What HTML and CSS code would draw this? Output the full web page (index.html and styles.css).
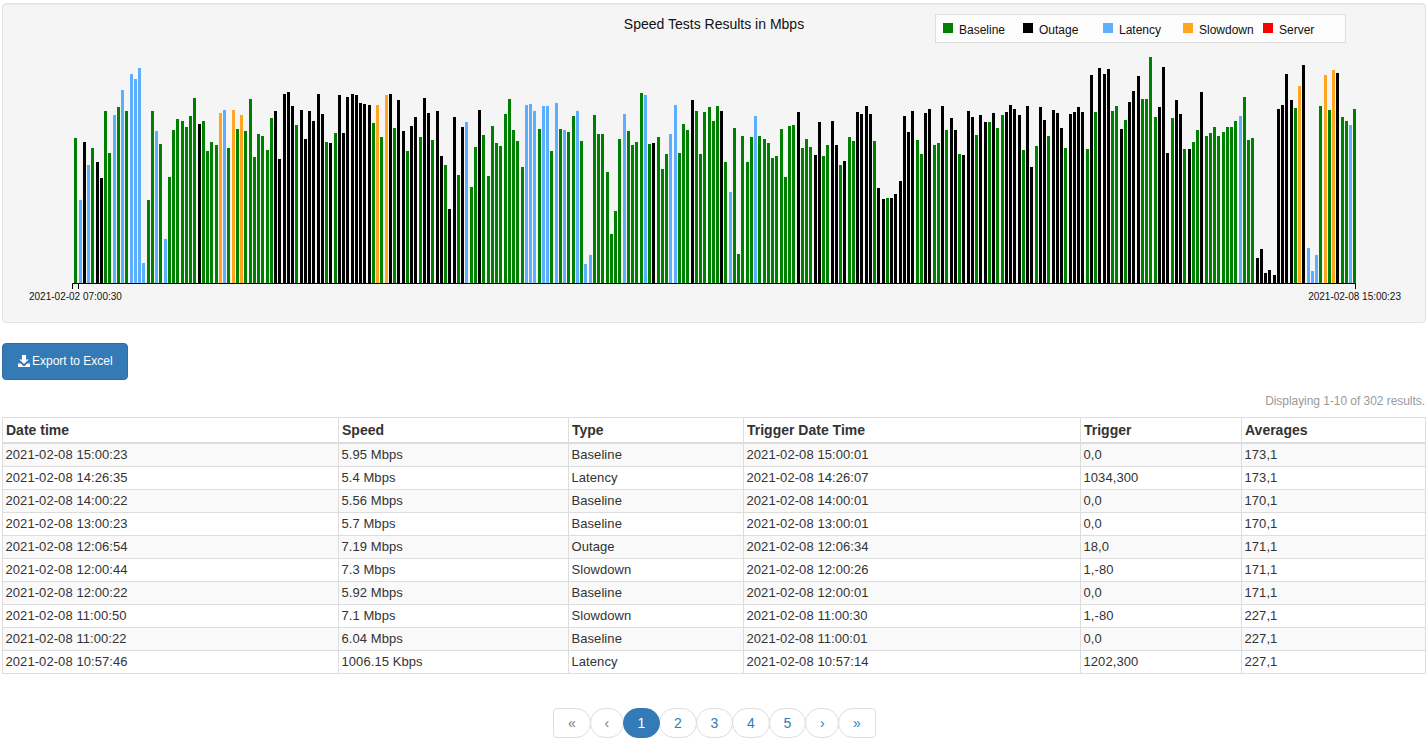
FILE: index.html
```html
<!DOCTYPE html>
<html lang="en">
<head>
<meta charset="utf-8">
<title>Speed Tests</title>
<link rel="stylesheet" href="styles.css">
</head>
<body>
<div class="well">
  <svg id="chart" class="chart" viewBox="3 4 1422 318" width="1422" height="318">
    <text class="chart-title" x="714" y="29" text-anchor="middle">Speed Tests Results in Mbps</text>
    <rect class="legend-box" x="935.5" y="14.5" width="410" height="28"></rect>
    <rect class="c-g" x="943" y="23" width="10" height="10"></rect>
    <text class="legend-text" x="959" y="34">Baseline</text>
    <rect class="c-k" x="1023" y="23" width="10" height="10"></rect>
    <text class="legend-text" x="1039" y="34">Outage</text>
    <rect class="c-b" x="1103" y="23" width="10" height="10"></rect>
    <text class="legend-text" x="1119" y="34">Latency</text>
    <rect class="c-o" x="1183" y="23" width="10" height="10"></rect>
    <text class="legend-text" x="1199" y="34">Slowdown</text>
    <rect class="c-r" x="1263" y="23" width="10" height="10"></rect>
    <text class="legend-text" x="1279" y="34">Server</text>
    <g id="bars"></g>
    <path class="axis" d="M72.500 289V283.500H1355.500V289M78.500 283.500V289"></path>
    <text class="axis-text" x="29" y="300">2021-02-02 07:00:30</text>
    <text class="axis-text" x="1401" y="300" text-anchor="end">2021-02-08 15:00:23</text>
  </svg>
</div>
<button class="btn" type="button">
  <svg class="btn-icon" viewBox="0 0 12 12" width="12" height="12"><path d="M4 0h4v4.500h2.600L6 9 1.400 4.500H4zM0 8.500h2.800L5 10.700c.6.500 1.400.500 2 0l2.200-2.200H12V12H0z"></path></svg>
  <span class="btn-label">Export to Excel</span>
</button>
<div class="summary">Displaying 1-10 of 302 results.</div>
<table class="grid">
  <colgroup>
    <col class="w1"><col class="w2"><col class="w3"><col class="w4"><col class="w5"><col class="w6">
  </colgroup>
  <thead>
    <tr><th>Date time</th><th>Speed</th><th>Type</th><th>Trigger Date Time</th><th>Trigger</th><th>Averages</th></tr>
  </thead>
  <tbody>
    <tr><td>2021-02-08 15:00:23</td><td>5.95 Mbps</td><td>Baseline</td><td>2021-02-08 15:00:01</td><td>0,0</td><td>173,1</td></tr>
    <tr><td>2021-02-08 14:26:35</td><td>5.4 Mbps</td><td>Latency</td><td>2021-02-08 14:26:07</td><td>1034,300</td><td>173,1</td></tr>
    <tr><td>2021-02-08 14:00:22</td><td>5.56 Mbps</td><td>Baseline</td><td>2021-02-08 14:00:01</td><td>0,0</td><td>170,1</td></tr>
    <tr><td>2021-02-08 13:00:23</td><td>5.7 Mbps</td><td>Baseline</td><td>2021-02-08 13:00:01</td><td>0,0</td><td>170,1</td></tr>
    <tr><td>2021-02-08 12:06:54</td><td>7.19 Mbps</td><td>Outage</td><td>2021-02-08 12:06:34</td><td>18,0</td><td>171,1</td></tr>
    <tr><td>2021-02-08 12:00:44</td><td>7.3 Mbps</td><td>Slowdown</td><td>2021-02-08 12:00:26</td><td>1,-80</td><td>171,1</td></tr>
    <tr><td>2021-02-08 12:00:22</td><td>5.92 Mbps</td><td>Baseline</td><td>2021-02-08 12:00:01</td><td>0,0</td><td>171,1</td></tr>
    <tr><td>2021-02-08 11:00:50</td><td>7.1 Mbps</td><td>Slowdown</td><td>2021-02-08 11:00:30</td><td>1,-80</td><td>227,1</td></tr>
    <tr><td>2021-02-08 11:00:22</td><td>6.04 Mbps</td><td>Baseline</td><td>2021-02-08 11:00:01</td><td>0,0</td><td>227,1</td></tr>
    <tr><td>2021-02-08 10:57:46</td><td>1006.15 Kbps</td><td>Latency</td><td>2021-02-08 10:57:14</td><td>1202,300</td><td>227,1</td></tr>
  </tbody>
</table>
<nav class="pager">
  <a class="page page-first page-muted">«</a>
  <a class="page page-arrow page-muted">‹</a>
  <a class="page page-num active">1</a>
  <a class="page page-num">2</a>
  <a class="page page-num">3</a>
  <a class="page page-num">4</a>
  <a class="page page-num">5</a>
  <a class="page page-arrow">›</a>
  <a class="page page-last">»</a>
</nav>
<script src="chart.js"></script>
</body>
</html>
```
FILE: styles.css
```css
* { box-sizing: border-box; }
html, body { margin: 0; height: 100%; overflow: hidden; }
body {
  padding: 3px 2px 0;
  background: #fff;
  color: #333;
  font-family: "Liberation Sans", Arial, sans-serif;
  font-size: 13px;
}
.well {
  height: 320px;
  background: #f5f5f5;
  border: 1px solid #e3e3e3;
  border-radius: 4px;
  box-shadow: inset 0 1px 1px rgba(0, 0, 0, .05);
}
.chart { display: block; }
.chart-title { font-size: 14px; fill: #111; }
.legend-box { fill: #fcfcfc; stroke: #ddd; }
.legend-text { font-size: 12px; fill: #111; }
.axis { fill: none; stroke: #000; stroke-width: 1; }
.axis-text { font-size: 10px; fill: #111; }
.c-g { fill: #008000; }
.c-k { fill: #000; }
.c-b { fill: #5caeff; }
.c-o { fill: #ffa51f; }
.c-r { fill: #f00; }
.btn {
  display: flex;
  align-items: center;
  gap: 2px;
  margin-top: 20px;
  width: 126px;
  height: 37px;
  padding: 0 0 0 15px;
  background: #337ab7;
  border: 1px solid #2e6da4;
  border-radius: 4px;
  color: #fff;
  font: 12px "Liberation Sans", Arial, sans-serif;
}
.btn-icon { fill: #fff; flex: none; margin-bottom: 2px; }
.btn-label { margin-bottom: 2px; }
.summary {
  margin-top: 14px;
  padding-right: 1px;
  height: 23px;
  line-height: 15px;
  text-align: right;
  color: #999;
  font-size: 12px;
  letter-spacing: -.05px;
}
.grid {
  width: 1423px;
  table-layout: fixed;
  border-collapse: collapse;
  border: 1px solid #ddd;
}
.w1 { width: 336px; }
.w2 { width: 230px; }
.w3 { width: 175px; }
.w4 { width: 337px; }
.w5 { width: 161px; }
.w6 { width: 184px; }
.grid th, .grid td {
  border: 1px solid #ddd;
  text-align: left;
  line-height: 16px;
}
.grid th {
  padding: 4px 3px;
  border-bottom-width: 2px;
  font-size: 14px;
  font-weight: bold;
}
.grid td { height: 23px; padding: 3px 2.500px; letter-spacing: .07px; }
.grid tbody tr:nth-child(odd) { background: #f9f9f9; }
.pager {
  display: flex;
  justify-content: center;
  margin-top: 34px;
  padding-left: 2px;
}
.page {
  display: flex;
  align-items: center;
  justify-content: center;
  height: 30px;
  margin-left: -1px;
  background: #fff;
  border: 1px solid #ddd;
  border-radius: 15px;
  color: #337ab7;
  font-size: 14px;
}
.page-num { width: 37.500px; }
.page-arrow { width: 34px; }
.page-first, .page-last { width: 37.500px; }
.page-first { border-radius: 4px 15px 15px 4px; }
.page-last { border-radius: 15px 4px 4px 15px; }
.page-muted { color: #777; }
.page.active { background: #337ab7; border-color: #337ab7; color: #fff; position: relative; }
```
FILE: chart.js
```js
var SEGMENTS = [
  [60, "g46.264 b61.450 k73.276 b85.345 g97.294 k112.336 k124.384 g136.183 g148.309 b163.195 g175.171 b187.120 g199.183 b214.72 b226.87 b238.54 b250.639 g265.450 g277.183 b289.243 g301.282 b316.567 g328.381 g340.240 g352.207 g367.213 g379.231 g391.198 g403.144 k418.222 g430.213 g442.303 g454.276 g469.285 o481.189 b493.180 g505.294 o520.180 g532.237 o544.195 g556.243 g571.147 g583.321 g595.252 g607.258 g622.300 g634.204 k646.183 k658.327 k673.132 k685.126 k697.168 g709.225 k724.180 k736.267 k748.183 k760.213 k775.132 k787.192 g799.276 k811.279 g826.249 k838.135 k850.249 k862.141 k877.132 k889.135 k901.159 k913.162 k928.165 g940.219 o952.165 g964.261 o979.135"],
  [380, "k31.132 g43.234 k55.150 k70.243 g82.303 k94.228 k106.201 g121.261 k133.144 k145.189 g157.270 k172.183 k184.318 g196.345 k208.477 k223.201 g235.375 k247.231 b259.216 g274.411 g286.291 k298.180 g310.255 g325.378 g337.228 g349.279 g361.288 g376.192 g388.147 g400.240 g412.273 g427.351 b439.165 b451.162 b463.183 g478.237 b490.168 b502.168 g514.303 b529.159 g541.237 b553.240 g565.246 g580.198 b592.183 g604.273 b616.642 b631.615 g643.195 g655.252 g667.252 g682.366 g694.552 g706.483 g718.267 b733.192 g745.243 g757.285 g769.276 g784.129 b796.135 g808.282 k820.279 g835.261 g847.357 g859.312 b871.252 b886.165 g898.309 g910.222 g922.240 k937.150 g949.183"],
  [700, "g1.312 g13.186 g28.171 g40.213 g52.168 k64.183 g76.336 b91.426 g103.234 g115.612 g127.258 g142.336 g154.261 b166.198 g178.258 g193.267 g205.279 g217.324 g229.318 g244.237 g256.381 g268.228 g280.225 k295.186 g307.294 g319.267 g331.291 k346.315 k358.216 g370.318 g382.285 k397.213 k409.285 g421.345 k433.333 g448.261 g460.273 k472.186 k484.192 k499.168 k511.192 g523.273 k535.414 k550.447 g562.444 k574.444 k586.432 k601.393 k613.198 k625.246 k637.183 g652.270 g664.312 k676.189 k688.177 g703.285 g715.279 k727.168 g739.240 k754.204 k766.240 g778.312 k790.315 k805.183 k817.201 g829.255 k841.195 k856.216 g868.216 k880.189 g892.234 g907.195 k919.186 k931.165 k943.177 k958.195 g970.300 k982.168"],
  [1030, "k4.351 g19.288 k31.171 k43.210 g55.258 k70.180 k82.189 k94.234 g106.294 k121.192 k133.186 k145.171 k157.186 g172.297 k184.75 g196.186 k208.54 k223.72 k235.57 g247.183 g259.168 k274.237 g286.210 k298.156 k310.123 k325.78 g337.147 g349.147 g361.21 g376.201 k388.171 k400.51 k412.309 g427.204 k439.150 k451.192 g463.297 k478.297 g490.276 g502.240 k514.126 g529.258 g541.249 g553.231 g565.258 g580.246 g592.231 g604.231 g616.213 b631.198 g643.141 g655.270 g667.264 k682.624 k694.597 k706.669 k718.660 k733.675 k745.177 k757.165 k769.72 k784.150 g796.174 o808.108 k820.45 b835.594 b847.663 b859.615 g871.168 o886.75 g898.180 o910.60 k922.69 g937.201 g949.213 b961.225 g973.177"]
];

var SVG_NS = "http://www.w3.org/2000/svg";
var BASELINE = 283;
var group = document.getElementById("bars");

SEGMENTS.forEach(function (segment) {
  segment[1].split(" ").forEach(function (token) {
    var parts = token.slice(1).split(".");
    var top = 50 + Number(parts[1]) / 3;
    var bar = document.createElementNS(SVG_NS, "rect");
    bar.setAttribute("class", "c-" + token[0]);
    bar.setAttribute("x", Math.round(segment[0] + (Number(parts[0]) - 4) / 3));
    bar.setAttribute("y", top);
    bar.setAttribute("width", 3);
    bar.setAttribute("height", BASELINE - top);
    group.appendChild(bar);
  });
});
```
